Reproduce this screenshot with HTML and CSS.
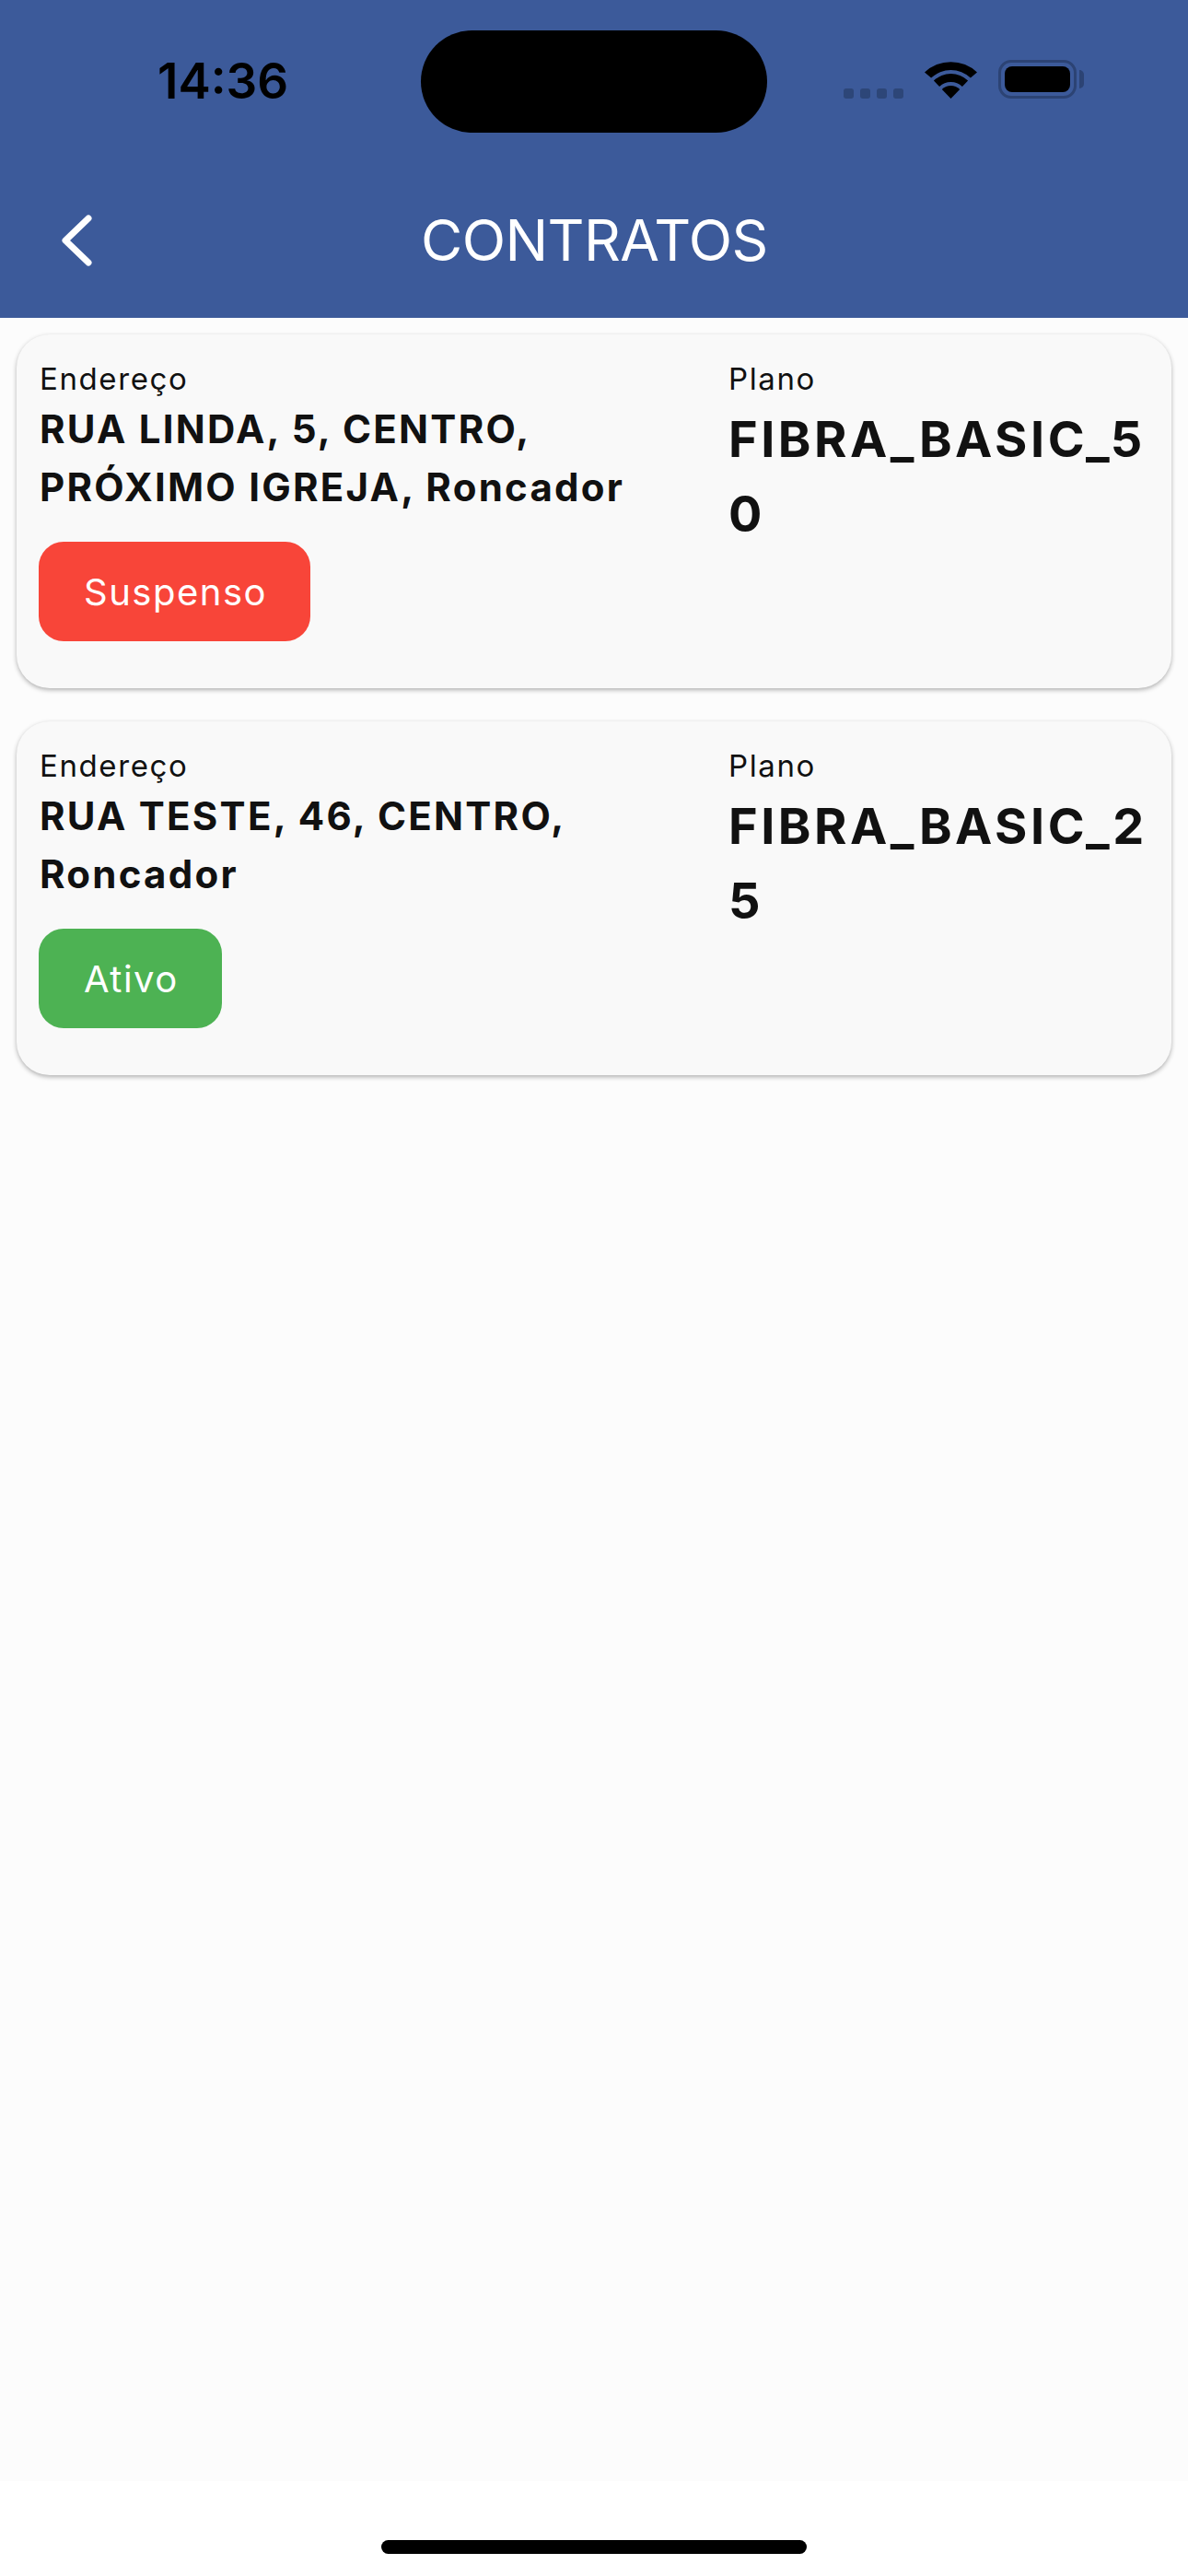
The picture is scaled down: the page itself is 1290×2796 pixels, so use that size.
FILE: index.html
```html
<!DOCTYPE html>
<html lang="pt-BR">
<head>
  <meta charset="UTF-8">
  <meta name="viewport" content="width=device-width, initial-scale=1.0">
  <title>Contratos</title>
  <link rel="stylesheet" href="styles.css">
</head>
<body>
  <header class="app-header">
    <div class="status-bar">
      <span class="status-time">14:36</span>
      <div class="island"></div>
      <div class="signal-dots">
        <span></span><span></span><span></span><span></span>
      </div>
      <svg class="wifi-icon" width="57" height="42" viewBox="0 0 57 42">
        <path d="M0 13.5A41.4 41.4 0 0 1 57 13.5L49.9 19.6A31 31 0 0 0 7.1 19.6Z"/>
        <path d="M9.9 22.5A27 27 0 0 1 47.1 22.5L40.9 29A18 18 0 0 0 16.1 29Z"/>
        <path d="M18.8 31.9A14 14 0 0 1 38.2 31.9L28.5 42Z"/>
      </svg>
      <div class="battery"><div class="battery-level"></div></div>
      <div class="battery-nub"></div>
    </div>
    <div class="title-bar">
      <svg class="back-icon" width="33" height="56" viewBox="0 0 33 56">
        <path d="M29 4L4 28L29 52" fill="none" stroke="#fff" stroke-width="7" stroke-linecap="round" stroke-linejoin="round"/>
      </svg>
      <h1 class="page-title">CONTRATOS</h1>
    </div>
  </header>

  <main class="contract-list">
    <!-- contrato suspenso -->
    <section class="contract-card">
      <div class="contract-address">
        <p class="field-label">Endereço</p>
        <p class="address-value">RUA LINDA, 5, CENTRO, PRÓXIMO IGREJA, Roncador</p>
        <span class="status-badge status-suspended">Suspenso</span>
      </div>
      <div class="contract-plan">
        <p class="field-label">Plano</p>
        <p class="plan-value">FIBRA_BASIC_50</p>
      </div>
    </section>

    <!-- contrato ativo -->
    <section class="contract-card">
      <div class="contract-address">
        <p class="field-label">Endereço</p>
        <p class="address-value">RUA TESTE, 46, CENTRO, Roncador</p>
        <span class="status-badge status-active">Ativo</span>
      </div>
      <div class="contract-plan">
        <p class="field-label">Plano</p>
        <p class="plan-value">FIBRA_BASIC_25</p>
      </div>
    </section>
  </main>

  <footer class="home-area">
    <div class="home-bar"></div>
  </footer>
</body>
</html>
```

FILE: styles.css
```css
html, body {
  margin: 0;
  padding: 0;
  height: 100%;
  overflow: hidden;
}

body {
  display: flex;
  flex-direction: column;
  background-color: #ffffff;
  font-family: "Inter", "Liberation Sans", sans-serif;
  color: #111111;
}

/* Header */
.app-header {
  height: 345px;
  background-color: #3c5a9a;
}

.status-bar {
  display: flex;
  align-items: flex-start;
  height: 180px;
  box-sizing: border-box;
  padding-left: 171px;
}

.status-time {
  width: 286px;
  margin-top: 58px;
  font-size: 53px;
  font-weight: 600;
  line-height: 60px;
  color: #000000;
}

.island {
  width: 376px;
  height: 111px;
  margin-top: 33px;
  border-radius: 56px;
  background-color: #000000;
}

.signal-dots {
  display: flex;
  gap: 7px;
  margin-top: 96px;
  margin-left: 83px;
}

.signal-dots span {
  width: 11px;
  height: 11px;
  border-radius: 3px;
  background-color: #2d4678;
}

.wifi-icon {
  margin-top: 65px;
  margin-left: 23px;
  fill: #000000;
}

.battery {
  box-sizing: border-box;
  width: 85px;
  height: 42px;
  margin-top: 65px;
  margin-left: 23px;
  padding: 4px;
  border: 3px solid #2c4374;
  border-radius: 14px;
}

.battery-level {
  height: 100%;
  border-radius: 8px;
  background-color: #000000;
}

.battery-nub {
  width: 5px;
  height: 20px;
  margin-top: 76px;
  margin-left: 3px;
  border-radius: 0 5px 5px 0;
  background-color: #2c4374;
}

.title-bar {
  display: flex;
  align-items: center;
  height: 165px;
  box-sizing: border-box;
  padding-left: 67px;
  padding-bottom: 3px;
}

.back-icon {
  flex-shrink: 0;
}

.page-title {
  margin: 0 0 0 357px;
  font-size: 62px;
  font-weight: 400;
  line-height: 72px;
  letter-spacing: -0.6px;
  color: #ffffff;
  white-space: nowrap;
}

/* Lista de contratos */
.contract-list {
  flex: 1;
  display: flex;
  flex-direction: column;
  gap: 36px;
  padding: 18px 18px 0;
  background-color: #fcfcfc;
}

.contract-card {
  display: grid;
  grid-template-columns: 1fr 465px;
  column-gap: 20px;
  height: 384px;
  box-sizing: border-box;
  padding: 28px 16px 0 24px;
  border-radius: 36px;
  background-color: #f9f9f9;
  box-shadow: 0 2px 5px rgba(0, 0, 0, 0.3);
}

.field-label {
  margin: 0;
  padding-left: 1px;
  font-size: 33px;
  line-height: 40px;
  letter-spacing: 1.6px;
}

.contract-plan .field-label,
.contract-plan .plan-value {
  padding-left: 0;
}

.address-value {
  margin: 3px 0 28px;
  padding-left: 1px;
  font-size: 42px;
  font-weight: 650;
  line-height: 63px;
  letter-spacing: 2.25px;
}

.plan-value {
  margin: 5px 0 0;
  font-size: 54px;
  font-weight: 700;
  line-height: 81px;
  letter-spacing: 3.5px;
  word-break: break-all;
}

.status-badge {
  display: inline-block;
  height: 108px;
  padding: 0 47px 0 49px;
  border-radius: 27px;
  font-size: 40px;
  line-height: 110px;
  letter-spacing: 1.5px;
  color: #ffffff;
}

.status-suspended {
  background-color: #f84539;
}

.status-active {
  background-color: #4db253;
}

/* Home indicator */
.home-area {
  display: flex;
  justify-content: center;
  height: 103px;
  box-sizing: border-box;
  padding-top: 64px;
}

.home-bar {
  width: 462px;
  height: 15px;
  border-radius: 8px;
  background-color: #000000;
}
```
